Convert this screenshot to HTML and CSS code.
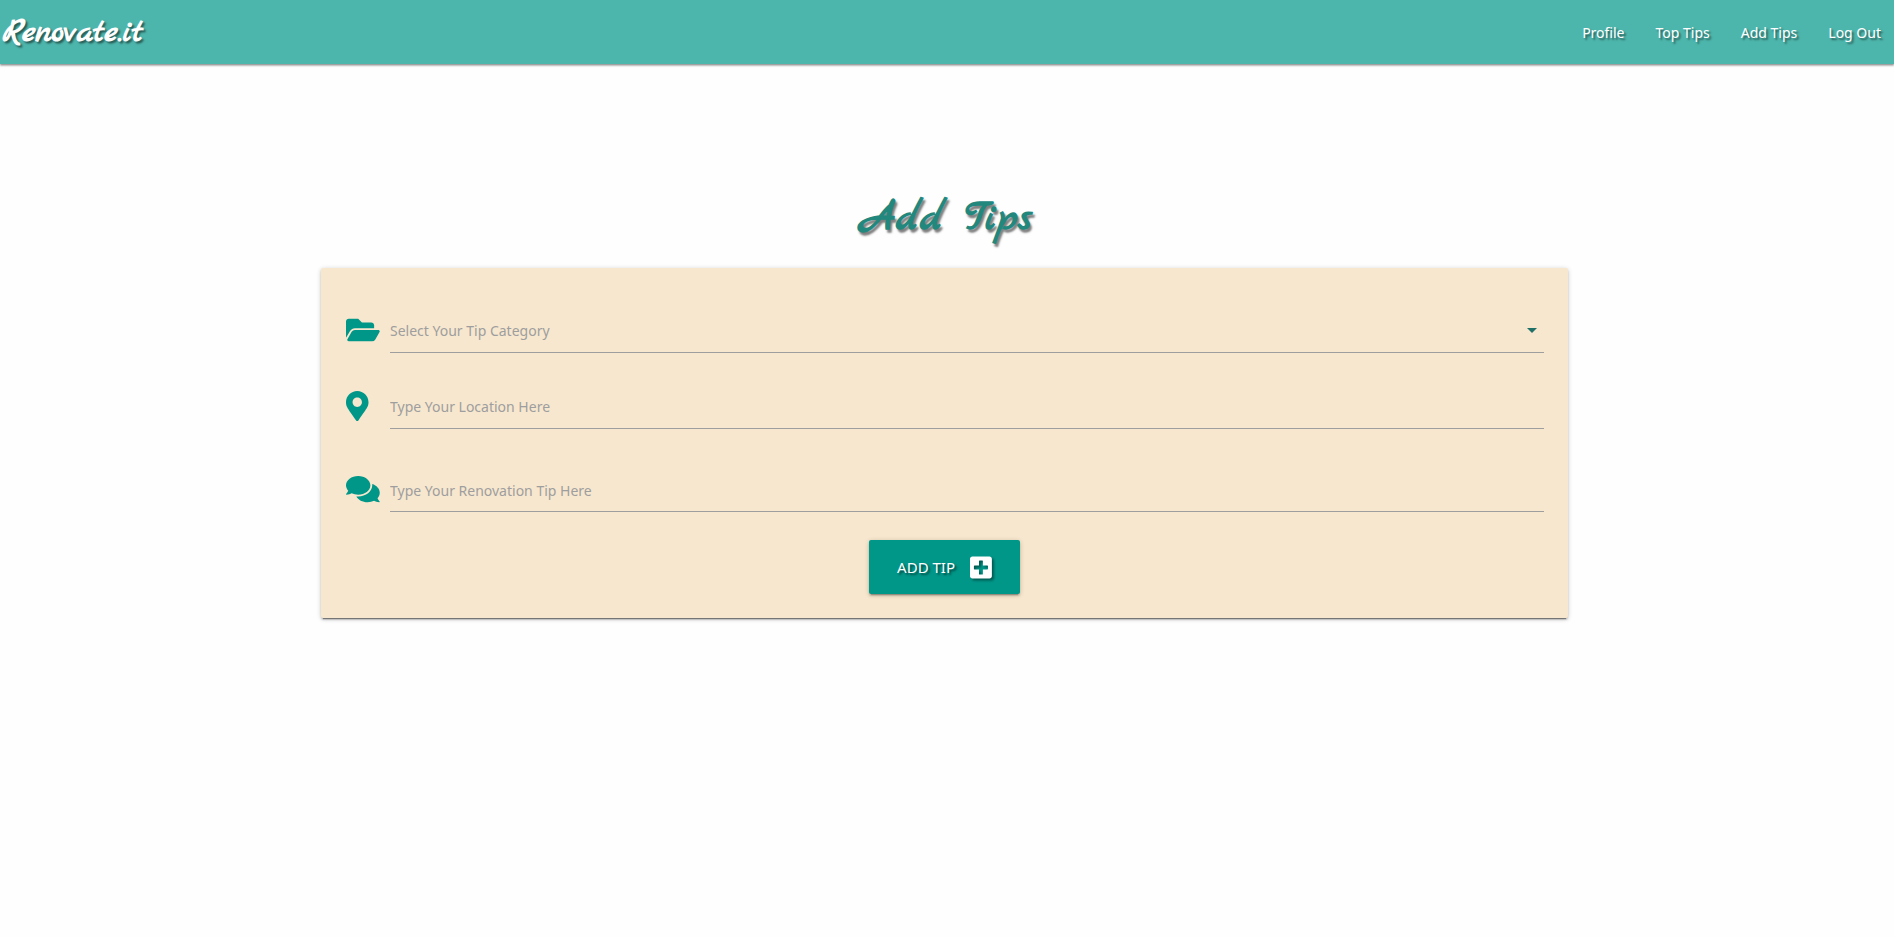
FILE: index.html
```html
<!DOCTYPE html>
<html lang="en">
<head>
<meta charset="utf-8">
<meta name="viewport" content="width=device-width, initial-scale=1">
<title>Renovate.it - Add Tips</title>
<link rel="stylesheet" href="styles.css">
</head>
<body>
<header class="navbar">
  <a class="brand" href="#">Renovate.it</a>
  <nav class="nav-links">
    <a href="#">Profile</a>
    <a href="#">Top Tips</a>
    <a href="#">Add Tips</a>
    <a href="#">Log Out</a>
  </nav>
</header>
<main class="container">
  <h1 class="title">Add Tips</h1>
  <form class="card">
    <div class="field">
      <label class="icon" for="category" aria-label="Tip category">
        <svg viewBox="0 0 576 512"><path d="M572.694 292.093L500.27 416.248A63.997 63.997 0 0 1 444.989 448H45.025c-18.523 0-30.064-20.093-20.731-36.093l72.424-124.155A64 64 0 0 1 152 256h399.964c18.523 0 30.064 20.093 20.73 36.093zM152 224h328v-48c0-26.51-21.49-48-48-48H272l-64-64H48C21.49 64 0 85.49 0 112v278.046l69.077-118.418C86.214 242.25 117.989 224 152 224z"/></svg>
      </label>
      <div class="select-wrap">
        <select class="control" id="category">
          <option>Select Your Tip Category</option>
        </select>
        <svg class="caret" viewBox="0 0 10 5"><path d="M0 0h10L5 5z"/></svg>
      </div>
    </div>
    <div class="field">
      <label class="icon" for="location" aria-label="Location">
        <svg viewBox="0 0 384 512"><path d="M172.268 501.67C26.97 291.031 0 269.413 0 192 0 85.961 85.961 0 192 0s192 85.961 192 192c0 77.413-26.97 99.031-172.268 309.67-9.535 13.774-29.93 13.773-39.464 0zM192 272c44.183 0 80-35.817 80-80s-35.817-80-80-80-80 35.817-80 80 35.817 80 80 80z"/></svg>
      </label>
      <input class="control" id="location" type="text" placeholder="Type Your Location Here">
    </div>
    <div class="field field-tip">
      <label class="icon" for="tip" aria-label="Renovation tip">
        <svg viewBox="0 0 576 512"><path d="M416 192c0-88.4-93.1-160-208-160S0 103.6 0 192c0 34.3 14.1 65.9 38 92-13.4 30.2-35.5 54.2-35.8 54.5-2.2 2.3-2.8 5.7-1.5 8.7S4.8 352 8 352c36.6 0 66.9-12.3 88.7-25 32.2 15.7 70.3 25 111.3 25 114.9 0 208-71.6 208-160zm122 220c23.9-26 38-57.7 38-92 0-66.9-53.5-124.2-129.3-148.1.9 6.6 1.3 13.3 1.3 20.1 0 105.9-107.7 192-240 192-10.8 0-21.3-.8-31.7-1.9C207.8 439.6 281.8 480 368 480c41 0 79.1-9.2 111.3-25 21.8 12.7 52.1 25 88.7 25 3.2 0 6.1-1.9 7.3-4.8 1.3-2.9.7-6.3-1.5-8.7-.3-.3-22.4-24.2-35.8-54.5z"/></svg>
      </label>
      <input class="control" id="tip" type="text" placeholder="Type Your Renovation Tip Here">
    </div>
    <button class="submit" type="submit">
      <span>ADD TIP</span>
      <svg viewBox="0 0 448 512"><path d="M400 32H48C21.5 32 0 53.5 0 80v352c0 26.5 21.5 48 48 48h352c26.5 0 48-21.5 48-48V80c0-26.5-21.5-48-48-48zm-32 252c0 6.6-5.4 12-12 12h-92v92c0 6.6-5.4 12-12 12h-56c-6.6 0-12-5.4-12-12v-92H92c-6.6 0-12-5.4-12-12v-56c0-6.6 5.4-12 12-12h92v-92c0-6.6 5.4-12 12-12h56c6.6 0 12 5.4 12 12v92h92c6.6 0 12 5.4 12 12v56z"/></svg>
    </button>
  </form>
</main>
</body>
</html>
```

FILE: styles.css
```css
* {
  box-sizing: border-box;
}

body {
  min-height: 100vh;
  margin: 0;
  background: #fefefe;
  color: #fff;
  font-family: "Segoe UI", "Noto Sans", "Open Sans", sans-serif;
  font-size: 14px;
}

.navbar {
  display: flex;
  justify-content: space-between;
  align-items: center;
  height: 64px;
  padding: 0 13px 0 2px;
  background: #4db6ac;
  box-shadow: 0 2px 2px rgba(0, 0, 0, 0.14), 0 1px 2px rgba(0, 0, 0, 0.4);
}

.navbar a {
  color: #fff;
  text-decoration: none;
  text-shadow: 2px 2px 2px rgba(0, 0, 0, 0.5);
}

.brand,
.title {
  font-family: "Marck Script", Damion, Lato, cursive;
  font-weight: 700;
}

.brand {
  font-size: 35px;
}

.nav-links {
  display: flex;
  gap: 31px;
}

.container {
  max-width: 1280px;
  margin: 0 auto;
  padding: 120px 19px 40px 14px;
}

.title {
  margin: 0 0 14px 5px;
  color: #22887e;
  font-size: 43px;
  line-height: 70px;
  text-align: center;
  text-shadow: 2px 3px 2px rgba(0, 0, 0, 0.5);
}

.card {
  display: flex;
  flex-direction: column;
  padding: 42px 24px 24px;
  border-radius: 2px;
  background: #f7e7ce;
  box-shadow: 0 2px 2px rgba(0, 0, 0, 0.14), 0 3px 1px -2px rgba(0, 0, 0, 0.4), 0 1px 5px rgba(0, 0, 0, 0.2);
}

.field {
  display: flex;
  align-items: center;
  margin-bottom: 33px;
}

.field:nth-child(2) {
  margin-bottom: 40px;
}

.icon {
  flex: 0 0 45px;
  padding: 0 0 3px 1px;
}

.icon svg {
  display: block;
  height: 30px;
  fill: #009688;
}

.control {
  display: block;
  flex: 1;
  width: 100%;
  height: 43px;
  padding: 0 0 2px;
  border: 0;
  border-bottom: 1px solid #9e9e9e;
  border-radius: 0;
  outline: 0;
  background: transparent;
  color: #9e9e9e;
  font: inherit;
  appearance: none;
}

.control::placeholder {
  color: #9e9e9e;
  opacity: 1;
}

.field-tip {
  margin-bottom: 28px;
}

.field-tip .control {
  padding: 0;
}

.select-wrap {
  position: relative;
  flex: 1;
}

.caret {
  position: absolute;
  top: 18px;
  right: 7px;
  width: 10px;
  fill: #1f7168;
  pointer-events: none;
}

.submit {
  display: flex;
  align-items: center;
  align-self: center;
  gap: 15px;
  height: 54px;
  padding: 0 28px;
  border: 0;
  border-radius: 2px;
  background: #009688;
  box-shadow: 0 2px 2px rgba(0, 0, 0, 0.14), 0 3px 1px -2px rgba(0, 0, 0, 0.2), 0 1px 5px rgba(0, 0, 0, 0.2);
  color: #fff;
  font: inherit;
  font-size: 15px;
  text-shadow: 2px 2px 2px rgba(0, 0, 0, 0.5);
}

.submit svg {
  height: 25px;
  fill: #fff;
  filter: drop-shadow(2px 2px 1px rgba(0, 0, 0, 0.4));
}
```
